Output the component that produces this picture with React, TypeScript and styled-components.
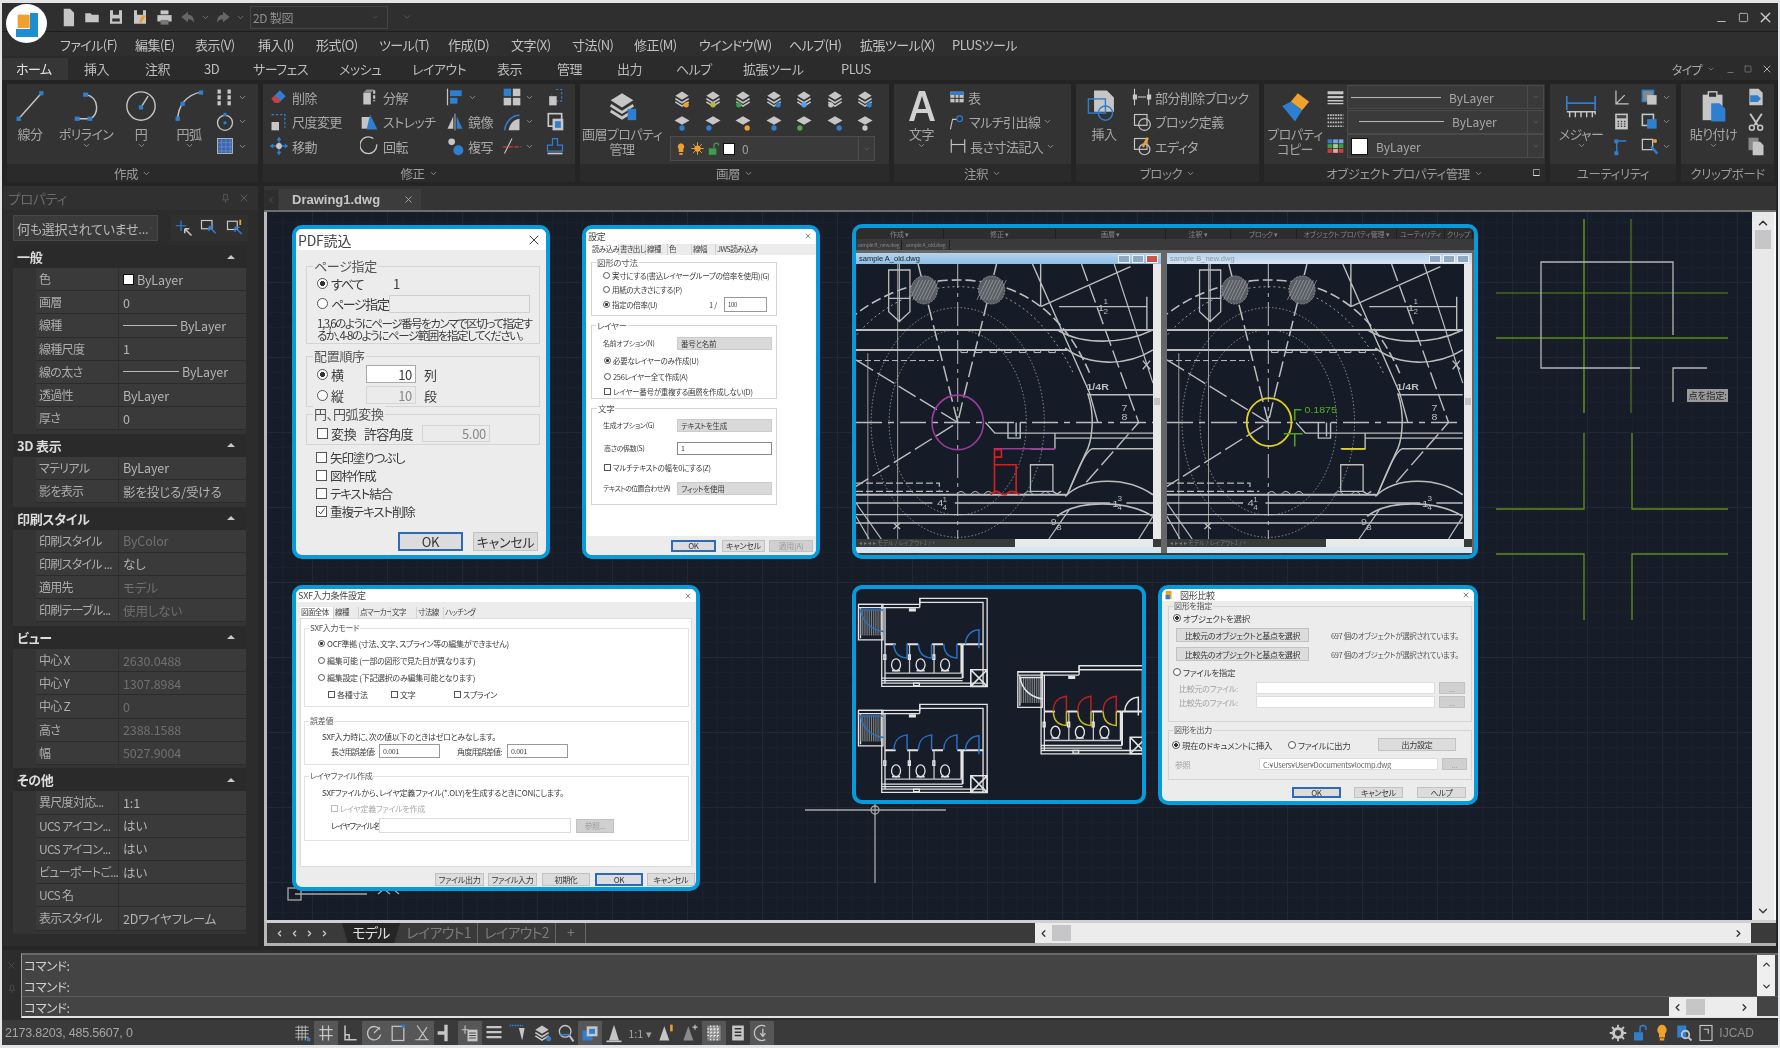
import React, { ReactNode } from 'react';
import styled, { createGlobalStyle } from 'styled-components';
import { ChevronDown, ChevronUp, ChevronLeft, ChevronRight, X, Minus, Square } from 'lucide-react';

const G = '#c6c6c6';
const D = '#8a8a8a';
const B = '#2f7fd0';
const O = '#efa02d';
const R = '#d23b3b';
const FONT = '"Noto Sans CJK JP", "Noto Sans", sans-serif';

const Global = createGlobalStyle`
  html, body { margin: 0; padding: 0; background: #2a2a2a; overflow: hidden; }
  * { box-sizing: border-box; }
  body { font-family: ${FONT}; font-feature-settings: "palt"; }
`;

const Root = styled.div`
  position: relative;
  width: 1780px;
  height: 1048px;
  padding: 3px 2px;
  background: #e2e4e6;
  display: flex;
  flex-direction: column;
  overflow: hidden;
  filter: blur(0.45px);
`;

/* ---------- title ---------- */
const LogoBadge = styled.div`
  position: absolute;
  left: 6px;
  top: 4px;
  width: 41px;
  height: 39px;
  border-radius: 50%;
  background: #fff;
  display: flex;
  align-items: center;
  justify-content: center;
  z-index: 5;
`;
const TitleBar = styled.div`
  height: 29px;
  background: #2f2f2f;
  border-bottom: 1px solid #1d1d1d;
  display: flex;
  align-items: center;
  padding-left: 54px;
  flex: none;
`;
const QuickIcon = styled.span<{ $w?: number }>`
  width: ${(p) => p.$w ?? 24}px;
  display: flex;
  align-items: center;
  justify-content: center;
  color: #888;
`;
const WorkspaceCombo = styled.div`
  width: 138px;
  height: 23px;
  border: 1px solid #454545;
  margin-left: 5px;
  display: flex;
  align-items: center;
  justify-content: space-between;
  padding: 0 8px 0 2px;
  color: #8f8f8f;
  font-size: 12px;
  letter-spacing: -0.3px;
`;
const WindowButtons = styled.div`
  margin-left: auto;
  display: flex;
  align-items: center;
  gap: 6px;
  padding-right: 4px;
  color: #b8b8b8;
`;
const MenuBar = styled.div`
  height: 24px;
  background: #2f2f2f;
  display: flex;
  align-items: center;
  padding-left: 58px;
  flex: none;
`;
const MenuItem = styled.span<{ $w: number }>`
  width: ${(p) => p.$w}px;
  flex: none;
  font-size: 13px;
  color: #c2c2c2;
  letter-spacing: -0.55px;
  white-space: nowrap;
`;
const TabBar = styled.div`
  height: 24px;
  background: #2b2b2b;
  display: flex;
  align-items: flex-end;
  flex: none;
`;
const RibbonTab = styled.span<{ $w: number; $active?: boolean }>`
  width: ${(p) => p.$w}px;
  height: 22px;
  flex: none;
  margin-right: ${(p) => (p.$active ? 16 : 0)}px;
  font-size: 13px;
  line-height: 22px;
  padding-left: ${(p) => (p.$active ? 14 : 0)}px;
  color: ${(p) => (p.$active ? '#e4e4e4' : '#bdbdbd')};
  background: ${(p) => (p.$active ? '#363636' : 'transparent')};
  letter-spacing: -0.5px;
  white-space: nowrap;
`;
const TabRight = styled.div`
  margin-left: auto;
  display: flex;
  align-items: center;
  height: 22px;
  gap: 5px;
  padding-right: 5px;
  color: #a8a8a8;
  font-size: 12px;
  letter-spacing: -0.6px;
`;

/* ---------- ribbon ---------- */
const Ribbon = styled.div`
  height: 106px;
  background: #242424;
  padding: 4px 0 4px 5px;
  display: flex;
  gap: 5px;
  flex: none;
`;
const Panel = styled.div<{ $w: number }>`
  width: ${(p) => p.$w}px;
  flex: none;
  display: flex;
  flex-direction: column;
`;
const PanelBody = styled.div<{ $pl?: number }>`
  height: 80px;
  background: #333333;
  display: flex;
  padding-left: ${(p) => p.$pl ?? 0}px;
`;
const PanelTitle = styled.div`
  position: relative;
  height: 18px;
  background: #2a2a2a;
  color: #9b9b9b;
  font-size: 12.5px;
  letter-spacing: -0.4px;
  display: flex;
  align-items: center;
  justify-content: center;
  gap: 4px;
`;
const Launcher = styled.span`
  position: absolute;
  right: 5px;
  top: 5px;
  width: 7px;
  height: 7px;
  border: 1px solid #999;
  border-right-color: #555;
  border-bottom-color: #ddd;
`;
const BigBtn = styled.div<{ $w: number }>`
  width: ${(p) => p.$w}px;
  flex: none;
  display: flex;
  flex-direction: column;
  align-items: center;
  padding-top: 5px;
  color: #a5a5a5;
  font-size: 13px;
  letter-spacing: -0.55px;
  line-height: 15px;
  text-align: center;
  svg { flex: none; }
`;
const BigLabel = styled.span`
  margin-top: 3px;
  white-space: nowrap;
`;
const ToolCol = styled.div<{ $w: number }>`
  width: ${(p) => p.$w}px;
  flex: none;
  display: flex;
  flex-direction: column;
  padding-top: 1px;
`;
const ToolRow = styled.div`
  height: 24.5px;
  display: flex;
  align-items: center;
  gap: 3px;
  color: #a8a8a8;
  font-size: 13px;
  letter-spacing: -0.55px;
  white-space: nowrap;
`;
const LayerGrid = styled.div`
  display: grid;
  grid-template-columns: repeat(7, 30.5px);
  grid-auto-rows: 24px;
  justify-items: center;
  align-items: center;
  padding-left: 3px;
  margin-top: 2px;
`;
const LayerCombo = styled.div`
  width: 205px;
  height: 25px;
  margin: 1px 0 0 6px;
  background: #3a3a3a;
  border: 1px solid #4c4c4c;
  display: flex;
  align-items: center;
  gap: 2px;
  padding-left: 3px;
  color: #a0a0a0;
  font-size: 12px;
`;
const ComboArrow = styled.span`
  margin-left: auto;
  width: 16px;
  align-self: stretch;
  border-left: 1px solid #4c4c4c;
  display: flex;
  align-items: center;
  justify-content: center;
  color: #666;
`;
const Swatch = styled.span<{ $s?: number }>`
  width: ${(p) => p.$s ?? 12}px;
  height: ${(p) => p.$s ?? 12}px;
  background: #fff;
  border: 1px solid #111;
  flex: none;
`;
const PropRow = styled.div`
  display: flex;
  align-items: center;
  height: 24.5px;
  gap: 2px;
`;
const PropCombo = styled.div`
  width: 197px;
  height: 24px;
  background: #3a3a3a;
  border: 1px solid #4a4a4a;
  display: flex;
  align-items: center;
  gap: 8px;
  padding-left: 3px;
  color: #a8a8a8;
  font-size: 12px;
`;
const LineSample = styled.span<{ $w: number }>`
  width: ${(p) => p.$w}px;
  height: 1px;
  background: #b8b8b8;
  display: inline-block;
  flex: none;
`;

/* ---------- main ---------- */
const Main = styled.div`
  height: 764px;
  display: flex;
  background: #262626;
  flex: none;
`;
const Props = styled.aside`
  width: 255px;
  height: 760px;
  flex: none;
  margin-left: 1px;
  background: #2c2c2c;
  display: flex;
  flex-direction: column;
  padding: 0 10px 0 10px;
`;
const PropsTitle = styled.div`
  height: 24px;
  margin: 0 -10px;
  padding: 0 8px 0 5px;
  background: #303030;
  display: flex;
  align-items: center;
  justify-content: space-between;
  color: #6a6a6a;
  font-size: 13.5px;
  letter-spacing: -0.3px;
`;
const SelectLine = styled.div`
  display: flex;
  justify-content: space-between;
  margin: 5px 0 4px;
  height: 26px;
`;
const SelectBox = styled.div`
  width: 145px;
  background: #3a3a3a;
  border: 1px solid #484848;
  display: flex;
  align-items: center;
  padding: 0 3px;
  color: #b8b8b8;
  font-size: 13px;
  letter-spacing: -0.25px;
  white-space: nowrap;
  justify-content: space-between;
`;
const SelectTools = styled.div`
  width: 77px;
  background: #303030;
  display: flex;
  align-items: center;
  justify-content: space-around;
`;
const SectionHead = styled.div`
  height: 23px;
  width: 233px;
  background: #2a2a2a;
  padding: 0 4px;
  display: flex;
  align-items: center;
  justify-content: space-between;
  color: #dcdcdc;
  font-size: 13px;
  font-weight: 700;
  letter-spacing: -0.3px;
`;
const Caret = styled.span`
  width: 0;
  height: 0;
  margin-right: 7px;
  border-left: 4px solid transparent;
  border-right: 4px solid transparent;
  border-bottom: 4px solid #c8c8c8;
`;
const SectionBody = styled.div`
  width: 233px;
  background: #343434;
  padding-bottom: 3.5px;
`;
const PropLine = styled.div`
  height: 23.2px;
  margin-left: 23px;
  display: flex;
  border-bottom: 1px solid #2b2b2b;
  background: #3a3a3a;
`;
const PropName = styled.span`
  width: 83px;
  flex: none;
  padding-left: 3px;
  border-right: 1px solid #2f2f2f;
  color: #adadad;
  font-size: 12px;
  line-height: 21px;
  letter-spacing: -0.7px;
  white-space: nowrap;
`;
const PropValue = styled.span<{ $dim?: boolean }>`
  flex: 1;
  padding-left: 4px;
  display: flex;
  align-items: center;
  gap: 3px;
  color: ${(p) => (p.$dim ? '#707070' : '#b4b4b4')};
  font-size: 12.5px;
  letter-spacing: -0.1px;
  white-space: nowrap;
  overflow: hidden;
`;
const Doc = styled.section`
  width: 1512px;
  flex: none;
  margin-left: 6px;
  display: flex;
  flex-direction: column;
`;
const DocTabs = styled.div`
  height: 26px;
  background: #343434;
  border-bottom: 2px solid #6d6d6d;
  display: flex;
  align-items: flex-end;
  flex: none;
`;
const DocArrow = styled.span`
  width: 14px;
  height: 20px;
  background: #2d2d2d;
  display: flex;
  align-items: center;
  justify-content: center;
  color: #5a5a5a;
`;
const DocTab = styled.span`
  width: 142px;
  height: 21px;
  margin-left: 1px;
  background: #3c3c3c;
  display: flex;
  align-items: center;
  justify-content: space-between;
  padding: 0 7px 0 13px;
  color: #c6c6c6;
  font-size: 13px;
  font-family: 'Liberation Sans', sans-serif;
  font-weight: 700;
`;
const CanvasRow = styled.div`
  height: 708px;
  display: flex;
  border-left: 3px solid #b9b9b9;
  flex: none;
`;
const Canvas = styled.div`
  position: relative;
  width: 1485px;
  height: 708px;
  flex: none;
  overflow: hidden;
  background-color: #161d29;
  background-image:
    linear-gradient(#202935 1px, transparent 1px),
    linear-gradient(90deg, #202935 1px, transparent 1px),
    linear-gradient(#1a212d 1px, transparent 1px),
    linear-gradient(90deg, #1a212d 1px, transparent 1px);
  background-size: 75px 75px, 75px 75px, 15px 15px, 15px 15px;
  background-position: -30px -5px;
`;
const CanvasOverlay = styled.svg`
  position: absolute;
  inset: 0;
  width: 100%;
  height: 100%;
`;
const CursorTip = styled.div`
  position: absolute;
  left: 1420px;
  top: 177px;
  width: 41px;
  height: 13px;
  background: #9a9a9a;
  color: #2a2a2a;
  font-size: 9.5px;
  line-height: 13px;
  text-align: center;
  letter-spacing: -0.3px;
  white-space: nowrap;
`;
const VScroll = styled.div`
  width: 24px;
  flex: none;
  background: #e9e9e9;
  border-right: 2px solid #f8f8f8;
  display: flex;
  flex-direction: column;
  align-items: center;
  color: #333;
`;
const VThumb = styled.span`
  width: 16px;
  height: 19px;
  background: #c6c6c8;
`;
const VFill = styled.span`
  flex: 1;
`;
const DocFoot = styled.div`
  height: 26px;
  background: #3a3a3a;
  border-top: 3px solid #d0d0d0;
  border-left: 3px solid #b9b9b9;
  border-bottom: 3px solid #b0b0b0;
  display: flex;
  flex: none;
`;
const NavGroup = styled.div`
  width: 75px;
  display: flex;
  align-items: center;
  justify-content: space-around;
  padding: 0 10px 0 5px;
  flex: none;
`;
const SheetTab = styled.span<{ $active?: boolean; $w: number }>`
  width: ${(p) => p.$w}px;
  flex: none;
  height: 20px;
  background: ${(p) => (p.$active ? '#252525' : 'transparent')};
  color: ${(p) => (p.$active ? '#e0e0e0' : '#7c7c7c')};
  clip-path: ${(p) => (p.$active ? 'polygon(0 0,100% 0,90% 100%,10% 100%)' : 'none')};
  border-right: ${(p) => (p.$active ? 'none' : '1px solid #666')};
  text-align: center;
  font-size: 14px;
  line-height: 19px;
  letter-spacing: -0.7px;
  white-space: nowrap;
`;
const HScroll = styled.div<{ $w: number; $ml?: string }>`
  width: ${(p) => p.$w}px;
  margin-left: ${(p) => p.$ml ?? 'auto'};
  height: 20px;
  flex: none;
  background: #ececec;
  display: flex;
  align-items: center;
  color: #333;
  padding: 0 7px 0 3px;
  gap: 3px;
`;
const HThumb = styled.span`
  width: 19px;
  height: 16px;
  background: #c6c6c8;
  flex: none;
`;

/* ---------- command + status ---------- */
const Command = styled.div`
  height: 70px;
  background: #2c2c2c;
  display: flex;
  padding: 3px 0 2px;
  flex: none;
`;
const CommandGrip = styled.div`
  width: 19px;
  flex: none;
  color: #4d4d4d;
  display: flex;
  flex-direction: column;
  align-items: center;
  gap: 13px;
  padding-top: 7px;
`;
const CommandBox = styled.div`
  flex: 1;
  background: #444444;
  border-top: 2px solid #6a6a6a;
  border-left: 1px solid #9a9a9a;
  border-bottom: 2px solid #e2e2e2;
  display: flex;
  flex-direction: column;
`;
const CommandHistory = styled.div`
  height: 42px;
  display: flex;
  border-bottom: 1px solid #5a5a5a;
  flex: none;
`;
const CommandLines = styled.div`
  flex: 1;
  padding-left: 2px;
`;
const CommandLine = styled.div`
  height: 21px;
  line-height: 22px;
  color: #cfcfcf;
  font-size: 12.5px;
  letter-spacing: -0.4px;
`;
const CommandInput = styled.div`
  flex: 1;
  display: flex;
  padding-left: 2px;
  align-items: center;
  color: #cfcfcf;
  font-size: 12.5px;
  letter-spacing: -0.4px;
`;
const CmdScroll = styled.div`
  width: 18px;
  margin-right: 3px;
  background: #efefef;
  display: flex;
  flex-direction: column;
  align-items: center;
  justify-content: space-between;
  padding: 4px 0;
  color: #333;
`;
const Status = styled.div`
  height: 25px;
  background: #3a3a3a;
  display: flex;
  align-items: center;
  flex: none;
  color: #a4a4a4;
  font-size: 12.5px;
`;
const Coord = styled.span`
  width: 288px;
  flex: none;
  padding-left: 3px;
  letter-spacing: -0.2px;
  font-family: 'Liberation Sans', sans-serif;
`;
const StatusBtn = styled.span<{ $on?: boolean; $w?: number }>`
  width: ${(p) => p.$w ?? 24}px;
  height: 24px;
  flex: none;
  display: flex;
  align-items: center;
  justify-content: center;
  background: ${(p) => (p.$on ? '#575757' : 'transparent')};
  font-size: 11px;
  color: #a0a0a0;
`;
const StatusRight = styled.div`
  margin-left: auto;
  display: flex;
  align-items: center;
  gap: 4px;
  padding-right: 24px;
  color: #8f8f8f;
  font-size: 12px;
  font-family: 'Liberation Sans', sans-serif;
`;

/* ---------- dialogs on canvas ---------- */
const Callout = styled.div<{ $x: number; $y: number; $w: number; $h: number; $bg?: string }>`
  position: absolute;
  left: ${(p) => p.$x - 267}px;
  top: ${(p) => p.$y - 212}px;
  width: ${(p) => p.$w}px;
  height: ${(p) => p.$h}px;
  border: 4px solid #059bdc;
  border-radius: 10px;
  background: ${(p) => p.$bg ?? '#ececec'};
  overflow: hidden;
  display: flex;
  flex-direction: column;
  color: #3c3c3c;
`;
const DlgTitle = styled.div<{ $h: number; $fs: number }>`
  height: ${(p) => p.$h}px;
  flex: none;
  background: #fff;
  display: flex;
  align-items: center;
  justify-content: space-between;
  padding: 0 4px 0 2px;
  font-size: ${(p) => p.$fs}px;
  color: #444;
  letter-spacing: -0.2px;
`;
const Group = styled.div<{ $h: number; $mt: number; $ml?: number; $mr?: number; $pl?: number; $fs?: number; $bc?: string }>`
  position: relative;
  height: ${(p) => p.$h}px;
  margin: ${(p) => p.$mt}px ${(p) => p.$mr ?? 0}px 0 ${(p) => p.$ml ?? 0}px;
  border: 1px solid ${(p) => p.$bc ?? '#d4d4d4'};
  padding-left: ${(p) => p.$pl ?? 0}px;
  font-size: ${(p) => p.$fs ?? 13}px;
  flex: none;
`;
const Legend = styled.span<{ $bg?: string; $x?: number; $fs?: number }>`
  position: absolute;
  left: ${(p) => p.$x ?? 6}px;
  top: ${(p) => -(p.$fs ?? 13) * 0.7}px;
  padding: 0 1px;
  background: ${(p) => p.$bg ?? '#ececec'};
  font-size: ${(p) => p.$fs ?? 13}px;
  line-height: ${(p) => (p.$fs ?? 13) * 1.3}px;
  color: #555;
  letter-spacing: -0.3px;
  white-space: nowrap;
`;
const Row = styled.div<{ $h: number; $mt?: number; $ml?: number; $gap?: number; $fs?: number; $color?: string; $ls?: number }>`
  height: ${(p) => p.$h}px;
  margin-top: ${(p) => p.$mt ?? 0}px;
  margin-left: ${(p) => p.$ml ?? 0}px;
  display: flex;
  align-items: center;
  gap: ${(p) => p.$gap ?? 0}px;
  ${(p) => (p.$fs ? `font-size:${p.$fs}px;` : '')}
  ${(p) => (p.$color ? `color:${p.$color};` : '')}
  letter-spacing: ${(p) => p.$ls ?? -0.3}px;
  white-space: nowrap;
`;
const HelpLine = styled.div<{ $mt?: number }>`
  height: 12px;
  margin: ${(p) => p.$mt ?? 0}px 0 0 10px;
  display: flex;
  align-items: center;
  font-size: 11.5px;
  letter-spacing: -1.45px;
  white-space: nowrap;
`;
const Fix = styled.span<{ $w: number; $ls?: number }>`
  width: ${(p) => p.$w}px;
  flex: none;
  display: inline-flex;
  align-items: center;
  gap: 2px;
  white-space: nowrap;
  ${(p) => (p.$ls !== undefined ? `letter-spacing:${p.$ls}px;` : '')}
`;
const Radio = styled.span<{ $on?: boolean; $s: number }>`
  width: ${(p) => p.$s}px;
  height: ${(p) => p.$s}px;
  flex: none;
  border-radius: 50%;
  border: 1px solid #555;
  background: ${(p) => (p.$on ? 'radial-gradient(circle, #333 0 38%, #fff 45%)' : '#fff')};
`;
const Check = styled.span<{ $on?: boolean; $s: number; $muted?: boolean }>`
  width: ${(p) => p.$s}px;
  height: ${(p) => p.$s}px;
  flex: none;
  border: 1px solid ${(p) => (p.$muted ? '#bbb' : '#555')};
  background: #fff;
  display: flex;
  align-items: center;
  justify-content: center;
  color: #333;
`;
const Field = styled.span<{ $w: number; $h: number; $ml?: number; $bg?: string; $bc?: string; $align?: string; $fs?: number; $color?: string }>`
  width: ${(p) => p.$w}px;
  height: ${(p) => p.$h}px;
  margin-left: ${(p) => p.$ml ?? 0}px;
  flex: none;
  background: ${(p) => p.$bg ?? '#fff'};
  border: 1px solid ${(p) => p.$bc ?? '#bcbcbc'};
  display: flex;
  align-items: center;
  justify-content: ${(p) => p.$align ?? 'flex-start'};
  padding: 0 3px;
  overflow: hidden;
  ${(p) => (p.$fs ? `font-size:${p.$fs}px;` : '')}
  color: ${(p) => p.$color ?? 'inherit'};
`;
const Spacer = styled.span<{ $w: number }>`
  width: ${(p) => p.$w}px;
  flex: none;
  display: inline-block;
`;
const DlgBtn = styled.span<{ $w: number; $h: number; $ml?: number; $default?: boolean; $fs: number; $muted?: boolean }>`
  width: ${(p) => p.$w}px;
  height: ${(p) => p.$h}px;
  margin-left: ${(p) => p.$ml ?? 0}px;
  flex: none;
  background: ${(p) => (p.$muted ? '#d0d0d0' : '#dcdcdc')};
  border: 1px solid ${(p) => (p.$default ? '#2d6cb5' : '#c2c2c2')};
  ${(p) => (p.$default ? 'outline: 1px solid #2d6cb5;outline-offset:-2px;' : '')}
  font-size: ${(p) => p.$fs}px;
  color: ${(p) => (p.$muted ? '#9c9c9c' : '#333')};
  display: flex;
  align-items: center;
  justify-content: center;
  letter-spacing: -0.3px;
  white-space: nowrap;
`;
const BtnBar = styled.div<{ $pr: number; $mt?: number; $pos?: string }>`
  margin-top: ${(p) => p.$mt ?? 0}px;
  display: flex;
  justify-content: ${(p) => p.$pos ?? 'flex-end'};
  padding-right: ${(p) => p.$pr}px;
  flex: none;
`;
const Tabs = styled.div<{ $ml: number; $h: number; $mt: number }>`
  height: ${(p) => p.$h}px;
  margin: ${(p) => p.$mt}px 0 0 ${(p) => p.$ml}px;
  display: flex;
  flex: none;
  background: #ececec;
`;
const Tab = styled.span<{ $w: number; $on?: boolean; $fs: number }>`
  width: ${(p) => p.$w}px;
  flex: none;
  font-size: ${(p) => p.$fs}px;
  line-height: ${(p) => p.$fs + 3}px;
  padding-left: 1px;
  color: #444;
  background: ${(p) => (p.$on ? '#fff' : '#ebebeb')};
  border-right: 1px solid #d2d2d2;
  letter-spacing: -0.6px;
  white-space: nowrap;
`;
const WhitePage = styled.div<{ $h: number; $mx: number }>`
  height: ${(p) => p.$h}px;
  margin: 0 ${(p) => p.$mx}px;
  background: #fff;
  border: 1px solid #dcdcdc;
  flex: none;
  overflow: hidden;
`;
const WhiteFill = styled.div`
  position: relative;
  flex: 1;
  background: #fff;
`;
const BottomBand = styled.div<{ $h: number }>`
  height: ${(p) => p.$h}px;
  background: #ececec;
  flex: none;
  display: flex;
  align-items: center;
`;

/* compare window */
const CmpStrip = styled.div<{ $h: number; $bg: string; $fs: number }>`
  height: ${(p) => p.$h}px;
  background: ${(p) => p.$bg};
  flex: none;
  display: flex;
  align-items: center;
  color: #858585;
  font-size: ${(p) => p.$fs}px;
  letter-spacing: -0.2px;
  white-space: nowrap;
`;
const CmpCell = styled.span<{ $w: number }>`
  width: ${(p) => p.$w}px;
  flex: none;
  text-align: center;
  border-right: 1px solid #202020;
  line-height: 10px;
`;
const CmpPanes = styled.div`
  display: flex;
  flex: none;
  gap: 6px;
  background: #666;
  padding-top: 3px;
  height: 303px;
`;
const CmpWin = styled.div`
  width: 305px;
  flex: none;
  display: flex;
  flex-direction: column;
  background: #d7e6f3;
`;
const CmpBar = styled.div<{ $active?: boolean }>`
  height: 11px;
  background: linear-gradient(#b5d4ee, ${(p) => (p.$active ? '#8dbde6' : '#d5e4f1')});
  display: flex;
  align-items: center;
  gap: 2px;
  padding: 0 3px;
  color: ${(p) => (p.$active ? '#222' : '#8b98a4')};
  font-size: 7.5px;
  font-family: 'Liberation Sans', sans-serif;
  flex: none;
  white-space: nowrap;
`;
const CmpBtn = styled.span<{ $red?: boolean }>`
  width: 12px;
  height: 8px;
  background: ${(p) => (p.$red ? '#c9564b' : '#8fa9c2')};
  border: 1px solid #eee;
  flex: none;
`;
const CmpBtnGap = styled.span`
  margin-left: auto;
`;
const CmpBody = styled.div`
  height: 275px;
  display: flex;
  flex: none;
`;
const Dwg = styled.svg`
  flex: 1;
  height: 100%;
  background: #151c28;
  display: block;
  min-width: 0;
  * { vector-effect: non-scaling-stroke; }
`;
const CmpV = styled.div`
  width: 8px;
  flex: none;
  background: #e8e8e8;
  display: flex;
  flex-direction: column;
  align-items: center;
  justify-content: center;
`;
const CmpVThumb = styled.span`
  width: 6px;
  height: 7px;
  background: #c4c4c4;
`;
const CmpFoot = styled.div`
  height: 8px;
  background: #3a3a3a;
  display: flex;
  flex: none;
  color: #777;
  font-size: 5.5px;
  line-height: 8px;
  padding-left: 3px;
  letter-spacing: 0.2px;
  white-space: nowrap;
`;
const CmpHScroll = styled.span`
  margin-left: auto;
  width: 138px;
  background: #e9e9e9;
  margin-right: 8px;
`;
const PlanSvg = styled.svg`
  width: 100%;
  height: 100%;
  display: block;
  * { vector-effect: non-scaling-stroke; }
`;
const CmpNote = styled.span`
  margin-left: 22px;
  font-size: 7.5px;
  letter-spacing: -0.35px;
  color: #555;
`;

/* ---------- icon helper ---------- */
const Icn = ({ s = 18, children, w, h }: { s?: number; w?: number; h?: number; children: ReactNode }) => (
  <svg width={w ?? s} height={h ?? s} viewBox="0 0 24 24" fill="none" style={{ flex: 'none' }}>
    {children}
  </svg>
);
const Chev = ({ s = 9 }: { s?: number }) => <ChevronDown size={s} color="#9a9a9a" strokeWidth={2.2} />;

const layerBase = (
  <>
    <path d="M12 3 20 8 12 13 4 8z" fill={G} />
    <path d="M4 11.5 12 16.5 20 11.5" stroke={G} strokeWidth="2" />
    <path d="M4 15.5 12 20.5 20 15.5" stroke={G} strokeWidth="2" />
  </>
);
const LayerIcn = ({ c, i }: { c: string; i: number }) => (
  <Icn s={20}>
    {i > 6 ? <path d="M12 4 21 9 12 14 3 9z" fill={G} /> : layerBase}
    <circle cx={i % 3 === 0 ? 17 : i % 3 === 1 ? 12 : 7} cy={i > 6 ? 18 : 19} r="3.2" fill={c} />
  </Icn>
);

const icons: Record<string, ReactNode> = {
  erase: <><path d="M3 14 13 4l7 7-8 8H7z" fill={B} /><path d="M3 14l4 5h5l2-2-7-7z" fill={R} /></>,
  explode: <><path d="M4 7h9v14H4z" fill={G} /><path d="M4 7l4-4h9l-4 4z" fill="#8f8f8f" /><path d="M17 4v13" stroke={G} strokeWidth="2.5" strokeDasharray="4 2" /></>,
  scale: <><path d="M3 3h16v16" stroke={B} strokeWidth="1.5" strokeDasharray="3 2" /><rect x="3" y="12" width="9" height="10" fill={G} /></>,
  stretch: <><rect x="2" y="6" width="10" height="14" fill={G} /><path d="M12 3 21 21H8z" fill={B} /></>,
  move: <><path d="M12 2v20M2 12h20" stroke={B} strokeWidth="1.6" /><circle cx="12" cy="12" r="3.5" fill={G} /><path d="M12 1 9 5h6zM12 23l-3-4h6zM1 12l4-3v6zM23 12l-4-3v6z" fill={B} /></>,
  rotate: <path d="M16 3a10 10 0 1 0 4 7" stroke={G} strokeWidth="1.6" />,
  copy: <><circle cx="8" cy="7" r="4" fill={G} /><circle cx="16" cy="17" r="6" fill={B} /></>,
  mirror: <><path d="M3 20 10 5v15z" fill={G} /><path d="M14 5v15h7z" fill={B} /><path d="M12 2v20" stroke={G} strokeWidth="1" /></>,
  align: <><path d="M3 2v20" stroke={G} strokeWidth="1.5" /><rect x="6" y="4" width="14" height="7" fill={B} /><rect x="6" y="13" width="9" height="7" fill={B} /></>,
  grid4: <><rect x="2" y="2" width="9" height="9" fill={B} /><rect x="13" y="2" width="9" height="9" fill={G} /><rect x="2" y="13" width="9" height="9" fill={G} /><rect x="13" y="13" width="9" height="9" fill={G} /></>,
  fillet: <><path d="M21 4C12 4 5 11 3 22" stroke={B} strokeWidth="1.8" /><path d="M21 8v14H8C9 14 14 9 21 8z" fill={G} /></>,
  trim: <><path d="M3 21 12 3" stroke={G} strokeWidth="1.4" /><path d="M1 13h22" stroke={R} strokeWidth="1.4" strokeDasharray="5 2" /></>,
  dash: <><path d="M13 3h7v14h-12v-8" stroke={B} strokeWidth="1.4" strokeDasharray="3 2" /><rect x="5" y="11" width="9" height="11" fill={G} /></>,
  offset: <><rect x="4" y="2" width="16" height="15" stroke={G} strokeWidth="2" /><rect x="9" y="8" width="13" height="14" fill={G} /><rect x="12" y="11" width="7" height="8" fill={B} /></>,
  stamp: <><path d="M9 3h6v8h6v7H3v-7h6z" stroke={B} strokeWidth="1.5" /><path d="M3 21h18" stroke={G} strokeWidth="2" /></>,
  dots: <><rect x="3" y="3" width="4" height="5" fill={G} /><rect x="15" y="3" width="4" height="5" fill={G} /><rect x="3" y="10" width="4" height="5" fill={G} /><rect x="15" y="10" width="4" height="5" fill={G} /><rect x="3" y="17" width="4" height="5" fill={G} /><rect x="15" y="17" width="4" height="5" fill={G} /></>,
  ring: <><circle cx="12" cy="13" r="9" stroke={G} strokeWidth="1.6" /><circle cx="12" cy="13" r="2" fill={B} /><rect x="10" y="1" width="4" height="4" fill={B} /></>,
  hatch: <><rect x="3" y="3" width="18" height="18" fill="#3c64a8" stroke={G} /><path d="M3 8h18M3 13h18M3 18h18M8 3v18M13 3v18M18 3v18" stroke="#7b9bd0" strokeWidth=".7" /></>,
  table: <><rect x="2" y="4" width="20" height="16" fill={G} /><rect x="2" y="4" width="20" height="5" fill={B} /><path d="M2 14h20M9 9v11M15 9v11" stroke="#333" strokeWidth="1.5" /></>,
  leader: <><path d="M2 23 5 9h6" stroke={G} strokeWidth="1.5" /><circle cx="15" cy="8" r="4" stroke={B} strokeWidth="1.6" /></>,
  dim: <><path d="M3 3v18M21 3v18" stroke={G} strokeWidth="1.5" /><path d="M3 10h18" stroke={G} strokeWidth="1.5" /></>,
  partial: <><path d="M3 2v20M20 2v20" stroke={G} strokeWidth="1.3" /><rect x="1" y="9" width="5" height="6" fill={G} /><rect x="18" y="9" width="5" height="6" fill={G} /><path d="M7 12h10" stroke={G} strokeWidth="1.3" /></>,
  blockdef: <><rect x="3" y="3" width="15" height="13" stroke={G} strokeWidth="1.4" /><circle cx="15" cy="15" r="7" stroke={G} strokeWidth="1.4" /></>,
  editor: <><rect x="3" y="3" width="15" height="13" stroke={G} strokeWidth="1.4" /><circle cx="15" cy="16" r="6.5" stroke={G} strokeWidth="1.4" /><path d="M13 13 19 2" stroke={O} strokeWidth="3" /></>,
  ltype: <path d="M2 4h20v4H2zM2 10h20v3H2zM2 15h20v2H2zM2 19h20v1.5H2z" fill={G} />,
  lweight: <path d="M2 4h20M2 8h20M2 13h20M2 18h20" stroke={G} strokeWidth="2.2" strokeDasharray="2 1.2" />,
  colors: <><rect x="2" y="3" width="6" height="5" fill={B} /><rect x="9" y="3" width="6" height="5" fill="#7aa7d8" /><rect x="16" y="3" width="6" height="5" fill="#7aa7d8" /><rect x="2" y="9" width="6" height="5" fill="#3e9c3e" /><rect x="9" y="9" width="6" height="5" fill="#9ed09e" /><rect x="16" y="9" width="6" height="5" fill="#3e9c3e" /><rect x="2" y="15" width="6" height="5" fill={R} /><rect x="9" y="15" width="6" height="5" fill="#e9a8a8" /><rect x="16" y="15" width="6" height="5" fill={R} /></>,
  coord: <path d="M5 3v17h16M5 20 16 9" stroke={G} strokeWidth="1.5" />,
  selGroup: <><rect x="3" y="3" width="14" height="14" fill="#888" stroke={B} strokeWidth="2" /><rect x="9" y="9" width="12" height="12" fill={G} /></>,
  calc: <><rect x="4" y="2" width="16" height="20" fill={G} /><rect x="6" y="4" width="12" height="4" fill="#444" /><path d="M7 12h10M7 15h10M7 18h10" stroke="#444" strokeWidth="1.8" strokeDasharray="2 2" /></>,
  quick: <><rect x="3" y="3" width="14" height="14" stroke={G} strokeWidth="2" /><rect x="9" y="9" width="12" height="12" fill={B} /></>,
  dimA: <><path d="M6 21V5h12" stroke={B} strokeWidth="1.8" /><rect x="3" y="3" width="5" height="5" fill={B} /><rect x="3" y="18" width="5" height="5" fill={B} /></>,
  selPick: <><rect x="3" y="3" width="13" height="13" stroke={G} strokeWidth="1.6" /><path d="M14 12 22 21" stroke={B} strokeWidth="3" /><circle cx="19" cy="5" r="2.5" fill={O} /></>,
  pasteExt: <><path d="M4 2h11l5 5v15H4z" fill={G} /><path d="M5 10h9l4 4-4 4H5z" fill={B} /></>,
  cut: <><path d="M5 2l9 14M19 2 10 16" stroke={G} strokeWidth="2.2" /><circle cx="7" cy="19" r="3" stroke={G} strokeWidth="1.8" /><circle cx="17" cy="19" r="3" stroke={G} strokeWidth="1.8" /></>,
  copyDoc: <><rect x="3" y="2" width="12" height="15" fill="#888" /><path d="M8 7h9l4 4v12H8z" fill={G} /></>,
};
const T = ({ n, s = 18 }: { n: string; s?: number }) => <Icn s={s}>{icons[n]}</Icn>;

/* ---------- data ---------- */
const menu: [string, number][] = [
  ['ファイル(F)', 75], ['編集(E)', 60], ['表示(V)', 63], ['挿入(I)', 58], ['形式(O)', 63], ['ツール(T)', 69], ['作成(D)', 63],
  ['文字(X)', 61], ['寸法(N)', 62], ['修正(M)', 65], ['ウインドウ(W)', 90], ['ヘルプ(H)', 71], ['拡張ツール(X)', 92], ['PLUSツール', 80],
];
const ribbonTabs: [string, number][] = [
  ['ホーム', 66], ['挿入', 61], ['注釈', 59], ['3D', 49], ['サーフェス', 86], ['メッシュ', 73], ['レイアウト', 85], ['表示', 60], ['管理', 60],
  ['出力', 59], ['ヘルプ', 67], ['拡張ツール', 98], ['PLUS', 60],
];
type P = { n: string; v: ReactNode; dim?: boolean };
const bars = (w: number) => <LineSample $w={w} />;
const sections: { t: string; rows: P[] }[] = [
  { t: '一般', rows: [
    { n: '色', v: <><Swatch $s={11} />ByLayer</> },
    { n: '画層', v: '0' },
    { n: '線種', v: <>{bars(54)}ByLayer</> },
    { n: '線種尺度', v: '1' },
    { n: '線の太さ', v: <>{bars(56)}ByLayer</> },
    { n: '透過性', v: 'ByLayer' },
    { n: '厚さ', v: '0' },
  ]},
  { t: '3D 表示', rows: [{ n: 'マテリアル', v: 'ByLayer' }, { n: '影を表示', v: '影を投じる/受ける' }] },
  { t: '印刷スタイル', rows: [
    { n: '印刷スタイル', v: 'ByColor', dim: true },
    { n: '印刷スタイル ...', v: 'なし' },
    { n: '適用先', v: 'モデル', dim: true },
    { n: '印刷テーブル...', v: '使用しない', dim: true },
  ]},
  { t: 'ビュー', rows: [
    { n: '中心 X', v: '2630.0488', dim: true },
    { n: '中心 Y', v: '1307.8984', dim: true },
    { n: '中心 Z', v: '0', dim: true },
    { n: '高さ', v: '2388.1588', dim: true },
    { n: '幅', v: '5027.9004', dim: true },
  ]},
  { t: 'その他', rows: [
    { n: '異尺度対応...', v: '1:1' },
    { n: 'UCS アイコン...', v: 'はい' },
    { n: 'UCS アイコン...', v: 'はい' },
    { n: 'ビューポートご...', v: 'はい' },
    { n: 'UCS 名', v: '' },
    { n: '表示スタイル', v: '2Dワイヤフレーム' },
  ]},
];

/* ---------- CAD drawings ---------- */
const HatchBlob = ({ cx }: { cx: number }) => (
  <g>
    <ellipse cx={cx} cy="220" rx="32" ry="42" fill="#5a5f66" stroke="#8a8a8a" strokeDasharray="2 1" />
    {[-24, -16, -8, 0, 8, 16, 24].map((d) => (
      <path key={d} d={`M${cx + d - 12} ${220 + 30} L${cx + d + 12} ${220 - 30}`} stroke="#a2a2a2" strokeWidth="0.7" />
    ))}
  </g>
);
const DrawingCommon = () => (
  <g fill="none" stroke="#bcbcbc" strokeWidth="1">
    <ellipse cx="277" cy="618" rx="168" ry="278" stroke="#8f8f8f" strokeDasharray="1.5 2" />
    <ellipse cx="277" cy="618" rx="212" ry="345" stroke="#8f8f8f" strokeDasharray="1.5 2" />
    <path d="M-60 400C40 240 170 190 277 190S520 240 600 470" strokeWidth="1.6" strokeDasharray="10 4" />
    <path d="M-20 440C60 270 180 210 277 210S480 270 560 470" stroke="#9a9a9a" strokeDasharray="2 3" />
    <path d="M277 142V968" strokeDasharray="24 5 4 5" />
    <path d="M130 142V968M57 410V968" stroke="#9c9c9c" />
    <path d="M28 618H755" strokeWidth="1.5" strokeDasharray="26 6 6 6" />
    <path d="M28 340H755" strokeWidth="2" />
    <path d="M28 400H545" strokeWidth="2" />
    <path d="M28 432H230" strokeDasharray="6 3" />
    {[285, 320, 356, 392, 428, 464, 500].map((x) => <path key={x} d={`M${x} 400v8h16v-8`} />)}
    <path d="M108 160h52v85h-52zM108 245v40l26 30 26-30v-40M134 142V315" strokeWidth="1.3" />
    <path d="M180 142 265 560 277 618 288 560 372 142" strokeWidth="1.5" strokeDasharray="16 5" />
    <HatchBlob cx={195} />
    <HatchBlob cx={360} />
    <path d="M28 430 277 618 28 810" strokeWidth="1.4" strokeDasharray="20 5" />
    <path d="M480 270 700 150M460 142 600 530 620 618M480 142V270M525 270H740M740 240V340" strokeWidth="1.4" />
    <path d="M580 142 720 618 590 800" strokeWidth="1.4" strokeDasharray="18 5" />
    <path d="M660 142 755 500" strokeWidth="1.2" />
    <path d="M520 340C580 385 680 385 755 340M540 395C600 450 690 450 755 400" strokeWidth="1.6" />
    <path d="M595 535H755M595 530C615 600 605 680 590 710L545 835" strokeWidth="1.5" />
    <path d="M345 618 368 650H515V697M368 650H755M400 618V665H430V618M420 618V660M515 665H755" strokeWidth="1.4" />
    <path d="M605 697H755M605 697C585 710 565 780 545 835M455 697H515" strokeWidth="1.4" />
    <path d="M455 745H510V825H455zM510 825l10 8 10-8" strokeWidth="1.3" />
    <path d="M28 800H232V822M28 825H255" strokeWidth="1.2" strokeDasharray="7 3" />
    {[285, 320, 352, 450, 492].map((x) => <path key={x} d={`M${x - 12} 835q12 -20 24 0`} />)}
    <path d="M28 835H545" strokeWidth="2" />
    <path d="M28 860H215M270 860H650M690 860H755" strokeWidth="1.6" />
    <path d="M28 895H755M28 920H755" strokeWidth="1.3" />
    <path d="M540 840C590 780 690 780 755 835M520 900C570 850 690 850 755 900" strokeWidth="1.6" />
    <path d="M730 432 748 458M748 432 730 458M120 920 136 938M136 920 120 938" strokeWidth="1.3" />
    <path d="M28 860 90 968M28 900 60 968M500 968 550 880M720 968 755 900" strokeWidth="1.2" />
    <g fill="#bcbcbc" stroke="none" fontFamily="Liberation Sans" fontSize="28">
      <text x="620" y="282">1</text><text x="634" y="262" fontSize="20">1</text><text x="634" y="292" fontSize="20">2</text>
      <text x="592" y="520" fontWeight="700" fontSize="26">1/4R</text>
      <text x="678" y="583" fontSize="26">7</text><text x="678" y="611" fontSize="26">8</text>
      <text x="226" y="870">4</text><text x="240" y="858" fontSize="20">1</text><text x="240" y="880" fontSize="20">4</text>
      <text x="655" y="872">1</text><text x="668" y="853" fontSize="20">3</text><text x="668" y="880" fontSize="20">4</text>
      <text x="505" y="925" fontSize="26">9</text><text x="518" y="940" fontSize="24">8</text>
    </g>
  </g>
);
const LeftDwg = () => (
  <Dwg viewBox="28 142 727 826" preserveAspectRatio="none">
    <DrawingCommon />
    <g fill="none">
      <ellipse cx="277" cy="618" rx="63" ry="82" stroke="#9a3c9a" strokeWidth="1.6" />
      <path d="M365 697H515" stroke="#9a3c9a" strokeWidth="1.6" />
      <path d="M367 697V830M367 745H420V830M367 700H384V722H367" stroke="#d81e1e" strokeWidth="1.6" />
      <path d="M358 835q12 -18 24 -4 12 10 16 0 12 -14 30 4" stroke="#d81e1e" strokeWidth="1.6" />
    </g>
  </Dwg>
);
const RightDwg = () => (
  <Dwg viewBox="28 142 730 826" preserveAspectRatio="none">
    <DrawingCommon />
    <g fill="none">
      <ellipse cx="279" cy="617" rx="55" ry="72" stroke="#e0cf1f" strokeWidth="1.8" />
      <path d="M458 697H516" stroke="#e0cf1f" strokeWidth="1.8" />
      <path d="M358 580H342V612M315 652H362M342 652V690" stroke="#4ea025" strokeWidth="1.6" />
    </g>
    <text x="366" y="589" fill="#54ac28" fontFamily="Liberation Sans" fontSize="26">0.1875</text>
  </Dwg>
);

const PlanUnit = ({ x, y, top, bottom, extra }: { x: number; y: number; top?: string; bottom?: string; extra?: string }) => {
  const doors = [87, 147, 209];
  const stair = extra === '#e4e4e4' ? '#e4e4e4' : '#2a6fc4';
  return (
    <g transform={`translate(${x} ${y})`} fill="none" stroke="#e4e4e4" strokeWidth="1.3">
      <path d="M0 18h60v107H0zM5 30V120M5 125h56" />
      {Array.from({ length: 12 }, (_, i) => <path key={i} d={`M${5 + i * 4.5} 34V112`} stroke="#9a9a9a" strokeWidth="0.8" />)}
      <path d="M0 18h150V0h165v265H57V18M0 28h150M150 12h155v253M65 28V255h240M57 240H255M57 248H255M57 255H255" />
      <path d="M150 0v28M125 32h14v6h-14z" fill="#e4e4e4" />
      <path d="M65 138h26M119 138h27M180 138h27M242 138h10V225M255 138v102M255 138h50" strokeWidth="2" />
      <path d="M125 140V225M185 140V225M65 225h190" stroke="#c8c8c8" />
      {[92, 152, 212].map((c) => (
        <g key={c}>
          <ellipse cx={c} cy={200} rx={11} ry={18} />
          <path d={`M${c - 10} 218h20`} />
          <rect x={c - 30} y={170} width={5} height={14} />
        </g>
      ))}
      <path d="M275 215h40v50h-40zM275 215l40 50M315 215l-40 50" strokeWidth="1.6" />
      <path d="M135 255h14v8h-14z" />
      {top && doors.map((d) => <path key={d} d={`M${d} 137C${d} 112 ${d + 8} 97 ${d + 32} 92V137`} stroke={top} strokeWidth="1.5" />)}
      {bottom && doors.map((d) => <path key={d} d={`M${d} 137C${d} 162 ${d + 10} 178 ${d + 32} 180V137`} stroke={bottom} strokeWidth="1.5" />)}
      <path d="M262 138C262 115 275 96 295 95V150" stroke={extra ?? '#2a6fc4'} strokeWidth="1.5" />
      <path d="M5 34C10 70 30 95 62 100" stroke={stair} strokeWidth="1.5" />
      <path d="M5 35H60" stroke={stair} strokeWidth="1.5" />
    </g>
  );
};

/* ---------- dialogs ---------- */
const Tick = ({ s }: { s: number }) => (
  <svg width={s} height={s} viewBox="0 0 12 12"><path d="M2 6l3 3 5-7" fill="none" stroke="#333" strokeWidth="1.3" /></svg>
);

const PdfDialog = () => (
  <Callout $x={292} $y={225} $w={258} $h={334}>
    <DlgTitle $h={21} $fs={14}>PDF読込<X size={16} color="#444" strokeWidth={1.5} /></DlgTitle>
    <Group $h={78} $mt={16} $ml={10} $mr={6}>
      <Legend $x={6}>ページ指定</Legend>
      <Row $h={19} $mt={7} $ml={10} $gap={3}><Radio $on $s={11} /><Fix $w={59} $ls={-1}>すべて</Fix>1</Row>
      <Row $h={19} $mt={1} $ml={10} $gap={3}>
        <Radio $s={11} /><Fix $w={55} $ls={-1.4}>ページ指定</Fix><Field $w={141} $h={18} $bg="#ededed" $bc="#cfcfcf" />
      </Row>
      <HelpLine $mt={4}>1,3,6のようにページ番号をカンマで区切って指定す</HelpLine>
      <HelpLine>るか、4-8のようにページ範囲を指定してください。</HelpLine>
    </Group>
    <Group $h={51} $mt={12} $ml={10} $mr={6}>
      <Legend $x={6}>配置順序</Legend>
      <Row $h={18} $mt={8} $ml={10} $gap={3}>
        <Radio $on $s={11} /><Fix $w={32}>横</Fix><Field $w={50} $h={18} $align="flex-end" $bc="#aaa">10</Field><Spacer $w={2} />列
      </Row>
      <Row $h={18} $mt={3} $ml={10} $gap={3}>
        <Radio $s={11} /><Fix $w={32}>縦</Fix><Field $w={50} $h={18} $align="flex-end" $bg="#ebebeb" $bc="#d4d4d4" $color="#888">10</Field><Spacer $w={2} />段
      </Row>
    </Group>
    <Group $h={31} $mt={7} $ml={10} $mr={6}>
      <Legend $x={6}>円、円弧変換</Legend>
      <Row $h={18} $mt={9} $ml={10} $gap={3}>
        <Check $s={11} /><Fix $w={30}>変換</Fix><Fix $w={55} $ls={-0.8}>許容角度</Fix><Field $w={68} $h={17} $align="flex-end" $bg="#ebebeb" $bc="#d4d4d4" $color="#888">5.00</Field>
      </Row>
    </Group>
    <Row $h={18} $mt={3} $ml={20} $gap={3} $fs={12.5} $ls={-1.1}><Check $s={11} />矢印塗りつぶし</Row>
    <Row $h={18} $ml={20} $gap={3} $fs={12.5} $ls={-1.1}><Check $s={11} />図枠作成</Row>
    <Row $h={18} $ml={20} $gap={3} $fs={12.5} $ls={-1.1}><Check $s={11} />テキスト結合</Row>
    <Row $h={18} $ml={20} $gap={3} $fs={12.5} $ls={-1.1}><Check $on $s={11}><Tick s={11} /></Check>重複テキスト削除</Row>
    <BtnBar $pr={8} $mt={12}>
      <DlgBtn $w={65} $h={19} $fs={13} $default>OK</DlgBtn>
      <DlgBtn $w={65} $h={19} $ml={10} $fs={13}>キャンセル</DlgBtn>
    </BtnBar>
  </Callout>
);

const SettingTabs: [string, number][] = [['読み込み', 28], ['書き出し', 27], ['線種', 22], ['色', 24], ['線幅', 24], ['JWS読み込み', 40]];
const F9 = 8.5;
const SettingsDialog = () => (
  <Callout $x={582} $y={225} $w={238} $h={334} $bg="#fff">
    <DlgTitle $h={14} $fs={9}>設定<X size={8} color="#444" /></DlgTitle>
    <Tabs $ml={5} $h={11} $mt={1}>
      {SettingTabs.map(([t, w], i) => <Tab key={t} $w={w} $on={i === 0} $fs={7.5}>{t}</Tab>)}
    </Tabs>
    <WhiteFill>
      <Group $h={54} $mt={7} $ml={5} $mr={39} $fs={F9}>
        <Legend $bg="#fff" $x={4} $fs={F9}>図形の寸法</Legend>
        <Row $h={13} $mt={6} $ml={11} $gap={2} $fs={7.5}><Radio $s={7} />実寸にする(書込レイヤーグループの倍率を使用)(G)</Row>
        <Row $h={13} $mt={1} $ml={11} $gap={2} $fs={7.5}><Radio $s={7} />用紙の大きさにする(P)</Row>
        <Row $h={15} $mt={1} $ml={11} $gap={2} $fs={7.5}><Radio $on $s={7} /><Fix $w={95}>指定の倍率(U)</Fix>1 /<Field $w={43} $h={15} $ml={5} $bc="#999" $fs={6}>100</Field></Row>
      </Group>
      <Group $h={74} $mt={9} $ml={5} $mr={39} $fs={F9}>
        <Legend $bg="#fff" $x={4} $fs={F9}>レイヤー</Legend>
        <Row $h={14} $mt={10} $ml={11} $fs={7}><Fix $w={74}>名前オプション(N)</Fix><Field $w={95} $h={13} $bg="#d9d9d9" $bc="#ccc" $fs={7.5}>番号と名前</Field></Row>
        <Row $h={13} $mt={4} $ml={12} $gap={2} $fs={7.5}><Radio $on $s={7} />必要なレイヤーのみ作成(U)</Row>
        <Row $h={13} $mt={3} $ml={12} $gap={2} $fs={7.5}><Radio $s={7} />256レイヤー全て作成(A)</Row>
        <Row $h={13} $mt={2} $ml={12} $gap={2} $fs={7.5}><Check $s={7} />レイヤー番号が重複する画層を作成しない(D)</Row>
      </Group>
      <Group $h={97} $mt={9} $ml={5} $mr={39} $fs={F9}>
        <Legend $bg="#fff" $x={5} $fs={F9}>文字</Legend>
        <Row $h={14} $mt={9} $ml={11} $fs={7}><Fix $w={74}>生成オプション(G)</Fix><Field $w={95} $h={13} $bg="#d9d9d9" $bc="#ccc" $fs={7.5}>テキストを生成</Field></Row>
        <Row $h={14} $mt={9} $ml={12} $fs={7}><Fix $w={73}>高さの係数(S)</Fix><Field $w={95} $h={13} $bc="#888" $fs={7}>1</Field></Row>
        <Row $h={13} $mt={6} $ml={12} $gap={2} $fs={7.5}><Check $s={7} />マルチテキストの幅を0にする(Z)</Row>
        <Row $h={14} $mt={7} $ml={11} $fs={7}><Fix $w={74} $ls={-0.6}>テキストの位置合わせ(A)</Fix><Field $w={95} $h={13} $bg="#d9d9d9" $bc="#ccc" $fs={7.5}>フィットを使用</Field></Row>
      </Group>
    </WhiteFill>
    <BottomBand $h={19}>
      <DlgBtn $w={45} $h={12} $ml={85} $fs={8} $default>OK</DlgBtn>
      <DlgBtn $w={43} $h={12} $ml={6} $fs={8}>キャンセル</DlgBtn>
      <DlgBtn $w={44} $h={12} $ml={4} $fs={8} $muted>適用(A)</DlgBtn>
    </BottomBand>
  </Callout>
);

const SxfTabs: [string, number][] = [['図面全体', 34], ['線種', 25], ['点マーカー', 32], ['文字', 26], ['寸法線', 27], ['ハッチング', 30]];
const SxfDialog = () => (
  <Callout $x={292} $y={585} $w={408} $h={306}>
    <DlgTitle $h={13} $fs={9}>SXF入力条件設定<X size={8} color="#444" /></DlgTitle>
    <Tabs $ml={4} $h={11} $mt={5}>
      {SxfTabs.map(([t, w], i) => <Tab key={t} $w={w} $on={i === 0} $fs={7.5}>{t}</Tab>)}
    </Tabs>
    <WhitePage $h={249} $mx={4}>
      <Group $h={79} $mt={9} $ml={3} $mr={2} $fs={8} $bc="#e2e2e2">
        <Legend $bg="#fff" $x={4} $fs={8}>SXF入力モード</Legend>
        <Row $h={14} $mt={7} $ml={13} $gap={2} $fs={8}><Radio $on $s={7} />OCF準拠 (寸法、文字、スプライン等の編集ができません)</Row>
        <Row $h={14} $mt={3} $ml={13} $gap={2} $fs={8}><Radio $s={7} />編集可能 (一部の図形で見た目が異なります)</Row>
        <Row $h={14} $mt={3} $ml={13} $gap={2} $fs={8}><Radio $s={7} />編集設定 (下記選択のみ編集可能となります)</Row>
        <Row $h={14} $mt={3} $ml={23} $gap={2} $fs={8}>
          <Check $s={7} /><Fix $w={52}>各種寸法</Fix><Check $s={7} /><Fix $w={52}>文字</Fix><Check $s={7} />スプライン
        </Row>
      </Group>
      <Group $h={44} $mt={14} $ml={3} $mr={2} $fs={8} $bc="#e2e2e2">
        <Legend $bg="#fff" $x={4} $fs={8}>誤差値</Legend>
        <Row $h={12} $mt={8} $ml={17} $fs={8}>SXF入力時に、次の値以下のときはゼロとみなします。</Row>
        <Row $h={14} $mt={2} $ml={26} $fs={8}>
          <Fix $w={48} $ls={-0.8}>長さ用誤差値:</Fix><Field $w={61} $h={14} $bc="#999" $fs={7}>0.001</Field><Spacer $w={17} /><Fix $w={50} $ls={-0.8}>角度用誤差値:</Fix><Field $w={61} $h={14} $bc="#999" $fs={7}>0.001</Field>
        </Row>
      </Group>
      <Group $h={65} $mt={11} $ml={3} $mr={2} $fs={8} $bc="#e2e2e2">
        <Legend $bg="#fff" $x={4} $fs={8}>レイヤファイル作成</Legend>
        <Row $h={12} $mt={9} $ml={17} $fs={8}>SXFファイルから、レイヤ定義ファイル(*.OLY)を生成するときにONにします。</Row>
        <Row $h={12} $mt={4} $ml={26} $gap={2} $fs={8} $color="#aaa"><Check $s={7} $muted />レイヤ定義ファイルを作成</Row>
        <Row $h={15} $mt={4} $ml={26} $fs={8}>
          <Fix $w={48} $ls={-1}>レイヤファイル名:</Fix><Field $w={192} $h={15} $bc="#ddd" /><DlgBtn $w={38} $h={14} $ml={5} $fs={8} $muted>参照...</DlgBtn>
        </Row>
      </Group>
    </WhitePage>
    <BtnBar $pr={1} $mt={6}>
      <DlgBtn $w={49} $h={13} $fs={8}>ファイル出力</DlgBtn>
      <DlgBtn $w={49} $h={13} $ml={4} $fs={8}>ファイル入力</DlgBtn>
      <DlgBtn $w={48} $h={13} $ml={5} $fs={8}>初期化</DlgBtn>
      <DlgBtn $w={48} $h={13} $ml={5} $fs={8} $default>OK</DlgBtn>
      <DlgBtn $w={48} $h={13} $ml={4} $fs={8}>キャンセル</DlgBtn>
    </BtnBar>
  </Callout>
);

const CompareWindow = () => (
  <Callout $x={852} $y={224} $w={626} $h={335} $bg="#3a3a3a">
    <CmpStrip $h={11} $bg="#2d2d2d" $fs={7}>
      <CmpCell $w={88}>作成 ▾</CmpCell>
      <CmpCell $w={112}>修正 ▾</CmpCell>
      <CmpCell $w={110}>画層 ▾</CmpCell>
      <CmpCell $w={65}>注釈 ▾</CmpCell>
      <CmpCell $w={66}>ブロック ▾</CmpCell>
      <CmpCell $w={100}>オブジェクト プロパティ管理 ▾</CmpCell>
      <CmpCell $w={48}>ユーティリティ</CmpCell>
      <CmpCell $w={28}>クリップ</CmpCell>
    </CmpStrip>
    <CmpStrip $h={11} $bg="#3a3a3a" $fs={5}>
      <CmpCell $w={46}>sample B_new.dwg</CmpCell>
      <CmpCell $w={48}>sample A_old.dwg</CmpCell>
    </CmpStrip>
    <CmpPanes>
      <CmpWin>
        <CmpBar $active>sample A_old.dwg<CmpBtnGap /><CmpBtn /><CmpBtn /><CmpBtn $red /></CmpBar>
        <CmpBody>
          <LeftDwg />
          <CmpV><CmpVThumb /></CmpV>
        </CmpBody>
        <CmpFoot>◂ ▸ ◂ ▸ モデル / レイアウト1 / +<CmpHScroll /></CmpFoot>
      </CmpWin>
      <CmpWin>
        <CmpBar>sample B_new.dwg<CmpBtnGap /><CmpBtn /><CmpBtn /><CmpBtn /></CmpBar>
        <CmpBody>
          <RightDwg />
          <CmpV><CmpVThumb /></CmpV>
        </CmpBody>
        <CmpFoot>◂ ▸ ◂ ▸ モデル / レイアウト1 / +<CmpHScroll /></CmpFoot>
      </CmpWin>
    </CmpPanes>
  </Callout>
);

const PlanWindow = () => (
  <Callout $x={852} $y={585} $w={294} $h={219} $bg="#161d28">
    <PlanSvg viewBox="27 27 700 635" preserveAspectRatio="none">
      <PlanUnit x={33} y={55} bottom="#2a6fc4" />
      <PlanUnit x={33} y={374} top="#2a6fc4" />
      <PlanUnit x={423} y={258} top="#c01f1f" bottom="#c8b81e" extra="#e4e4e4" />
    </PlanSvg>
  </Callout>
);

const CompareDialog = () => (
  <Callout $x={1158} $y={585} $w={320} $h={220}>
    <DlgTitle $h={12} $fs={9}>
      <Row $h={12} $gap={6}><Icn s={10}><rect x="4" y="2" width="14" height="20" fill={O} /><rect x="4" y="12" width="10" height="10" fill={B} /></Icn>図形比較</Row>
      <X size={8} color="#444" />
    </DlgTitle>
    <Group $h={116} $mt={5} $ml={6} $mr={2} $fs={8}>
      <Legend $x={4} $fs={8}>図形を指定</Legend>
      <Row $h={12} $mt={5} $ml={4} $gap={2} $fs={8.5}><Radio $on $s={8} />オブジェクトを選択</Row>
      <Row $h={14} $mt={4} $ml={7} $fs={8}><DlgBtn $w={133} $h={14} $fs={8}>比較元のオブジェクトと基点を選択</DlgBtn><CmpNote>697 個のオブジェクトが選択されています。</CmpNote></Row>
      <Row $h={14} $mt={5} $ml={7} $fs={8}><DlgBtn $w={133} $h={14} $fs={8}>比較先のオブジェクトと基点を選択</DlgBtn><CmpNote>697 個のオブジェクトが選択されています。</CmpNote></Row>
      <Row $h={12} $mt={5} $ml={4} $gap={2} $fs={8.5}><Radio $s={8} />ファイルを指定</Row>
      <Row $h={12} $mt={4} $ml={10} $fs={8} $color="#a2a2a2"><Fix $w={77}>比較元のファイル:</Fix><Field $w={179} $h={12} $bc="#ddd" /><DlgBtn $w={26} $h={12} $ml={4} $fs={8} $muted>...</DlgBtn></Row>
      <Row $h={12} $mt={2} $ml={10} $fs={8} $color="#a2a2a2"><Fix $w={77}>比較先のファイル:</Fix><Field $w={179} $h={12} $bc="#ddd" /><DlgBtn $w={26} $h={12} $ml={4} $fs={8} $muted>...</DlgBtn></Row>
    </Group>
    <Group $h={50} $mt={8} $ml={6} $mr={2} $fs={8}>
      <Legend $x={4} $fs={8}>図形を出力</Legend>
      <Row $h={13} $mt={7} $ml={3} $fs={8.5}>
        <Fix $w={116}><Radio $on $s={8} />現在のドキュメントに挿入</Fix><Fix $w={90}><Radio $s={8} />ファイルに出力</Fix><DlgBtn $w={78} $h={13} $fs={8}>出力設定</DlgBtn>
      </Row>
      <Row $h={12} $mt={7} $ml={6} $fs={8} $color="#a2a2a2">
        <Fix $w={84}>参照</Fix><Field $w={179} $h={12} $bc="#ddd" $fs={7.5} $color="#666">C:¥Users¥User¥Documents¥locmp.dwg</Field><DlgBtn $w={25} $h={12} $ml={4} $fs={8} $muted>...</DlgBtn>
      </Row>
    </Group>
    <BtnBar $pr={8} $mt={7}>
      <DlgBtn $w={49} $h={11} $fs={8} $default>OK</DlgBtn>
      <DlgBtn $w={49} $h={11} $ml={13} $fs={8}>キャンセル</DlgBtn>
      <DlgBtn $w={49} $h={11} $ml={14} $fs={8}>ヘルプ</DlgBtn>
    </BtnBar>
  </Callout>
);

/* ---------- app ---------- */
const layerColors = [O, '#b8b83a', '#3aa04a', B, '#49a0ff', G, B, B, B, O, B, '#4fa84f', B, G];

const statusIcons: [ReactNode, boolean][] = [
  [<Icn s={20}><path d="M4 5h16M4 9h16M4 13h16M4 17h16M8 3v18M12 3v18M16 3v18" stroke={G} strokeWidth="1" /><rect x="18" y="18" width="4" height="4" fill={B} /></Icn>, false],
  [<Icn s={20}><path d="M4 8h16M4 15h16M8 3v18M15 3v18" stroke={G} strokeWidth="1.5" /></Icn>, true],
  [<Icn s={20}><path d="M6 3v17h14M6 14h5v6" stroke={G} strokeWidth="1.8" /></Icn>, false],
  [<Icn s={20}><path d="M19 8a8 8 0 1 0 1 6" stroke={G} strokeWidth="1.6" /><path d="M12 12 19 5" stroke={G} strokeWidth="1.4" /></Icn>, true],
  [<Icn s={20}><rect x="5" y="4" width="14" height="17" stroke={G} strokeWidth="1.5" /><rect x="16" y="2" width="4" height="4" fill={B} /></Icn>, true],
  [<Icn s={20}><path d="M6 3 18 20M4 20h16M18 5 8 20" stroke={G} strokeWidth="1.3" /></Icn>, true],
  [<Icn s={20}><path d="M12 2v20M2 12h9" stroke={G} strokeWidth="4" /></Icn>, false],
  [<Icn s={20}><path d="M6 3v10M2 8h8" stroke={G} strokeWidth="1.3" /><rect x="9" y="8" width="12" height="14" fill={G} /><path d="M11 12h8M11 15h8M11 18h8" stroke="#333" /></Icn>, true],
  [<Icn s={20}><path d="M3 5h18M3 11h18M3 17h18" stroke={G} strokeWidth="2.6" /></Icn>, false],
  [<Icn s={20}><path d="M2 3h16" stroke={B} strokeWidth="2" strokeDasharray="2 1" /><path d="M13 6h7l-3 15z" fill={G} /></Icn>, false],
  [<Icn s={20}>{layerBase}<circle cx="20" cy="19" r="3" fill={B} /></Icn>, false],
  [<Icn s={20}><circle cx="11" cy="10" r="7" stroke={G} strokeWidth="1.6" /><path d="M16 15 21 22" stroke={G} strokeWidth="2.4" /><path d="M5 14h12" stroke={B} strokeWidth="2" /></Icn>, false],
  [<Icn s={20}><rect x="3" y="9" width="12" height="12" fill={B} /><rect x="8" y="4" width="13" height="12" fill={G} /><rect x="11" y="7" width="7" height="6" fill={B} /></Icn>, true],
  [<Icn s={20}><path d="M12 2 18 21H6z" fill={G} /><path d="M3 22h18" stroke={G} strokeWidth="2" /></Icn>, false],
];
const statusIcons2: [ReactNode, boolean][] = [
  [<Icn s={20}><path d="M10 4 16 21H4z" fill={G} /><rect x="17" y="2" width="3" height="8" fill={O} /></Icn>, false],
  [<Icn s={20}><path d="M10 4 16 21H4z" fill="#8a8a8a" /><path d="M18 2v6M15 5h6" stroke={G} strokeWidth="1.4" /></Icn>, false],
  [<Icn s={20}><rect x="4" y="3" width="16" height="18" fill={D} /><path d="M4 7h16M4 11h16M4 15h16M8 3v18M12 3v18M16 3v18" stroke="#eee" strokeWidth="1.4" strokeDasharray="2 2" /></Icn>, true],
  [<Icn s={20}><rect x="5" y="3" width="14" height="18" fill={G} /><path d="M8 7h8M8 11h8M8 15h8" stroke="#333" strokeWidth="1.8" /></Icn>, false],
  [<Icn s={20}><path d="M16 4a9 9 0 1 0 0 16" stroke={G} strokeWidth="1.5" /><path d="M13 7v8M10 12l3 4 3-4" stroke={G} strokeWidth="1.5" /></Icn>, true],
];

export default function App() {
  return (
    <Root>
      <Global />
      <LogoBadge>
        <Icn s={32}>
          <rect x="5" y="5" width="9" height="10" fill={O} />
          <path d="M14.25 3.75h6v18H3.75v-6h10.5z" fill="#1c8fd0" />
        </Icn>
      </LogoBadge>
      <TitleBar>
        <QuickIcon><Icn s={19}><path d="M6 1h8l5 5v17H6z" fill={G} /></Icn></QuickIcon>
        <QuickIcon><Icn s={18}><path d="M3 7h7l2 2h9v10H3z" fill={G} /></Icn></QuickIcon>
        <QuickIcon><Icn s={18}><path d="M4 3h4v6h8V3h4v18H4z" fill={G} /><rect x="7" y="14" width="10" height="4" fill="#2f2f2f" /></Icn></QuickIcon>
        <QuickIcon><Icn s={18}><path d="M4 3h4v6h8V3h4v18H4z" fill={G} /><path d="M15 10h5l-7 11-2-4z" fill={O} /></Icn></QuickIcon>
        <QuickIcon><Icn s={19}><rect x="7" y="3" width="10" height="5" fill={G} /><rect x="3" y="9" width="18" height="8" fill={G} /><rect x="7" y="15" width="10" height="6" fill="#777" /></Icn></QuickIcon>
        <QuickIcon $w={24}><Icn s={18}><path d="M12 5 3 12l9 7v-4c4 0 6 1 8 5 0-8-3-11-8-11z" fill="#666" /></Icn></QuickIcon>
        <QuickIcon $w={11}><ChevronDown size={9} color="#888" /></QuickIcon>
        <QuickIcon $w={24}><Icn s={18}><path d="M12 5l9 7-9 7v-4c-4 0-6 1-8 5 0-8 3-11 8-11z" fill="#666" /></Icn></QuickIcon>
        <QuickIcon $w={10}><ChevronDown size={9} color="#888" /></QuickIcon>
        <WorkspaceCombo>2D 製図<ChevronDown size={8} color="#555" /></WorkspaceCombo>
        <QuickIcon $w={38}><ChevronDown size={10} color="#666" /></QuickIcon>
        <WindowButtons>
          <Minus size={13} color="#b8b8b8" strokeWidth={2} style={{ marginTop: 8 }} />
          <Square size={11} color="#b8b8b8" strokeWidth={2} style={{ marginLeft: 4 }} />
          <X size={17} color="#c8c8c8" strokeWidth={2} style={{ marginLeft: 2 }} />
        </WindowButtons>
      </TitleBar>
      <MenuBar>{menu.map(([t, w]) => <MenuItem key={t} $w={w}>{t}</MenuItem>)}</MenuBar>
      <TabBar>
        {ribbonTabs.map(([t, w], i) => <RibbonTab key={t} $w={w} $active={i === 0}>{t}</RibbonTab>)}
        <TabRight>タイプ<ChevronDown size={8} color="#999" /><Minus size={9} color="#888" style={{ marginTop: 6, marginLeft: 6 }} /><Square size={8} color="#888" style={{ marginLeft: 4 }} /><X size={12} color="#aaa" style={{ marginLeft: 4 }} /></TabRight>
      </TabBar>
      <Ribbon>
        <Panel $w={251}>
          <PanelBody>
            <BigBtn $w={46}><Icn s={34}><path d="M4 21 20 3" stroke={G} strokeWidth="1" /><rect x="2.5" y="19.5" width="3" height="3" fill={B} /><rect x="18.5" y="1.5" width="3" height="3" fill={B} /></Icn><BigLabel>線分</BigLabel></BigBtn>
            <BigBtn $w={66}><Icn s={34}><path d="M6 21H15C21 19 22 6 12 4" stroke={G} strokeWidth="1" /><rect x="4" y="19.5" width="3.5" height="3" fill={B} /><rect x="13" y="19.5" width="3.5" height="3" fill={B} /><rect x="10" y="2.5" width="3.5" height="3" fill={B} /></Icn><BigLabel>ポリライン</BigLabel><Chev /></BigBtn>
            <BigBtn $w={44}><Icn s={34}><circle cx="12" cy="12" r="10" stroke={G} strokeWidth="1" /><path d="M12 13 17 5" stroke={G} strokeWidth="1" /><rect x="10.5" y="11.5" width="3" height="3" fill={B} /></Icn><BigLabel>円</BigLabel><Chev /></BigBtn>
            <BigBtn $w={52}><Icn s={34}><path d="M4 22C4 12 10 4 21 2" stroke={G} strokeWidth="1" /><rect x="2.5" y="19.5" width="3" height="3" fill={B} /><rect x="6" y="9" width="3" height="3" fill={B} /><rect x="19" y="1" width="3" height="3" fill={B} /></Icn><BigLabel>円弧</BigLabel><Chev /></BigBtn>
            <ToolCol $w={43}>
              <ToolRow><T n="dots" s={20} /><Chev /></ToolRow>
              <ToolRow><T n="ring" s={20} /><Chev /></ToolRow>
              <ToolRow><T n="hatch" s={20} /><Chev /></ToolRow>
            </ToolCol>
          </PanelBody>
          <PanelTitle>作成 <Chev /></PanelTitle>
        </Panel>
        <Panel $w={312}>
          <PanelBody $pl={6}>
            <ToolCol $w={91}>
              <ToolRow><T n="erase" s={20} />削除</ToolRow>
              <ToolRow><T n="scale" s={20} />尺度変更</ToolRow>
              <ToolRow><T n="move" s={20} />移動</ToolRow>
            </ToolCol>
            <ToolCol $w={85}>
              <ToolRow><T n="explode" s={20} />分解</ToolRow>
              <ToolRow><T n="stretch" s={20} />ストレッチ</ToolRow>
              <ToolRow><T n="rotate" s={20} />回転</ToolRow>
            </ToolCol>
            <ToolCol $w={57}>
              <ToolRow><T n="align" s={20} /><Chev /></ToolRow>
              <ToolRow><T n="mirror" s={20} />鏡像</ToolRow>
              <ToolRow><T n="copy" s={20} />複写</ToolRow>
            </ToolCol>
            <ToolCol $w={43}>
              <ToolRow><T n="grid4" s={20} /><Chev /></ToolRow>
              <ToolRow><T n="fillet" s={20} /><Chev /></ToolRow>
              <ToolRow><T n="trim" s={20} /><Chev /></ToolRow>
            </ToolCol>
            <ToolCol $w={24}>
              <ToolRow><T n="dash" s={20} /></ToolRow>
              <ToolRow><T n="offset" s={20} /></ToolRow>
              <ToolRow><T n="stamp" s={20} /></ToolRow>
            </ToolCol>
          </PanelBody>
          <PanelTitle>修正 <Chev /></PanelTitle>
        </Panel>
        <Panel $w={309}>
          <PanelBody>
            <BigBtn $w={84}>
              <Icn s={34}>{layerBase}<rect x="16" y="14" width="6" height="8" fill={B} /></Icn>
              <BigLabel>画層プロパティ<br />管理</BigLabel>
            </BigBtn>
            <ToolCol $w={222}>
              <LayerGrid>
                {layerColors.map((c, i) => <LayerIcn key={i} c={c} i={i} />)}
              </LayerGrid>
              <LayerCombo>
                <Icn s={14}><path d="M12 2a6 6 0 0 1 4 10v5H8v-5a6 6 0 0 1 4-10z" fill={O} /><rect x="9" y="19" width="6" height="3" fill={O} /></Icn>
                <Icn s={15}><circle cx="12" cy="12" r="5" fill={O} /><path d="M12 2v20M2 12h20M5 5l14 14M19 5 5 19" stroke={O} strokeWidth="1.5" /></Icn>
                <Icn s={14}><rect x="3" y="11" width="13" height="11" fill="#3aa04a" /><path d="M12 11V6a4 4 0 0 1 8 0" stroke="#3aa04a" strokeWidth="2" /></Icn>
                <Swatch />
                <Spacer $w={3} />0
                <ComboArrow><ChevronDown size={8} /></ComboArrow>
              </LayerCombo>
            </ToolCol>
          </PanelBody>
          <PanelTitle>画層 <Chev /></PanelTitle>
        </Panel>
        <Panel $w={177}>
          <PanelBody>
            <BigBtn $w={55}>
              <svg width="30" height="34" viewBox="0 0 30 34"><path d="M12 2h6l10 30h-5l-2.5-8h-11L7 32H2zM11 20h8L15 7z" fill="#d0d0d0" /></svg>
              <BigLabel>文字</BigLabel><Chev />
            </BigBtn>
            <ToolCol $w={122}>
              <ToolRow><T n="table" s={16} />表</ToolRow>
              <ToolRow><T n="leader" s={17} />マルチ引出線<Chev /></ToolRow>
              <ToolRow><T n="dim" s={18} />長さ寸法記入<Chev /></ToolRow>
            </ToolCol>
          </PanelBody>
          <PanelTitle>注釈 <Chev /></PanelTitle>
        </Panel>
        <Panel $w={183}>
          <PanelBody>
            <BigBtn $w={56}>
              <Icn s={34}><path d="M5 1h9l5 5v10H5z" fill={G} /><rect x="1" y="7" width="12" height="10" stroke={B} strokeWidth="1" /><circle cx="13" cy="17" r="5" stroke={B} strokeWidth="1" /></Icn>
              <BigLabel>挿入</BigLabel>
            </BigBtn>
            <ToolCol $w={127}>
              <ToolRow><T n="partial" s={20} />部分削除ブロック</ToolRow>
              <ToolRow><T n="blockdef" s={20} />ブロック定義</ToolRow>
              <ToolRow><T n="editor" s={20} />エディタ</ToolRow>
            </ToolCol>
          </PanelBody>
          <PanelTitle>ブロック <Chev /></PanelTitle>
        </Panel>
        <Panel $w={281}>
          <PanelBody>
            <BigBtn $w={62}>
              <Icn s={34}><path d="M14 3 22 9 17 15 9 9z" fill={O} /><path d="M9 9 17 15 12 23 3 12z" fill={B} /></Icn>
              <BigLabel>プロパティ<br />コピー</BigLabel>
            </BigBtn>
            <ToolCol $w={218}>
              <PropRow><T n="ltype" s={19} /><PropCombo><LineSample $w={90} />ByLayer<ComboArrow><ChevronDown size={8} /></ComboArrow></PropCombo></PropRow>
              <PropRow><T n="lweight" s={19} /><PropCombo><Spacer $w={0} /><LineSample $w={85} />ByLayer<ComboArrow><ChevronDown size={8} /></ComboArrow></PropCombo></PropRow>
              <PropRow><T n="colors" s={19} /><PropCombo><Swatch $s={17} />ByLayer<ComboArrow><ChevronDown size={8} /></ComboArrow></PropCombo></PropRow>
            </ToolCol>
          </PanelBody>
          <PanelTitle>オブジェクト プロパティ管理 <Chev /><Launcher /></PanelTitle>
        </Panel>
        <Panel $w={126}>
          <PanelBody>
            <BigBtn $w={62}>
              <Icn s={34}><path d="M2 5v10M22 5v10M2 10h20" stroke={B} strokeWidth="1.2" /><path d="M2 16h20v2M4 16v4M8 16v4M12 16v4M16 16v4M20 16v4" stroke={G} strokeWidth="1" /></Icn>
              <BigLabel>メジャー</BigLabel><Chev />
            </BigBtn>
            <ToolCol $w={28}>
              <ToolRow><T n="coord" s={19} /></ToolRow>
              <ToolRow><T n="calc" s={19} /></ToolRow>
              <ToolRow><T n="dimA" s={19} /></ToolRow>
            </ToolCol>
            <ToolCol $w={36}>
              <ToolRow><T n="selGroup" s={19} /><Chev /></ToolRow>
              <ToolRow><T n="quick" s={19} /><Chev /></ToolRow>
              <ToolRow><T n="selPick" s={19} /><Chev /></ToolRow>
            </ToolCol>
          </PanelBody>
          <PanelTitle>ユーティリティ</PanelTitle>
        </Panel>
        <Panel $w={93}>
          <PanelBody>
            <BigBtn $w={65}>
              <Icn s={34}><rect x="4" y="4" width="14" height="18" fill={G} /><rect x="8" y="2" width="6" height="4" fill="#333" stroke={G} /><path d="M10 10h6l4 4v9H10z" fill={B} /></Icn>
              <BigLabel>貼り付け</BigLabel><Chev />
            </BigBtn>
            <ToolCol $w={26}>
              <ToolRow><T n="pasteExt" s={20} /></ToolRow>
              <ToolRow><T n="cut" s={20} /></ToolRow>
              <ToolRow><T n="copyDoc" s={20} /></ToolRow>
            </ToolCol>
          </PanelBody>
          <PanelTitle>クリップボード</PanelTitle>
        </Panel>
      </Ribbon>
      <Main>
        <Props>
          <PropsTitle>プロパティ<Row $h={12} $gap={7}><Icn s={11}><path d="M8 3h8v9l3 3H5l3-3zM12 15v7" stroke="#5b5b5b" strokeWidth="2" /></Icn><X size={12} color="#5b5b5b" /></Row></PropsTitle>
          <SelectLine>
            <SelectBox>何も選択されていませ...<ChevronDown size={8} color="#666" /></SelectBox>
            <SelectTools>
              <Icn s={18}><path d="M8 2v14M1 9h14" stroke={B} strokeWidth="1.6" /><path d="M13 13 22 22M13 13h6M13 13v6" stroke={G} strokeWidth="2" /></Icn>
              <Icn s={18}><rect x="2" y="2" width="14" height="11" stroke={G} strokeWidth="1.6" /><path d="M12 10l9 9M12 10h6M12 10v6" stroke={B} strokeWidth="2" /></Icn>
              <Icn s={18}><rect x="2" y="3" width="13" height="11" stroke={G} strokeWidth="1.6" /><path d="M12 11l9 9M12 11h6M12 11v6" stroke={B} strokeWidth="2" /><path d="M19 1v7" stroke={O} strokeWidth="2.4" /></Icn>
            </SelectTools>
          </SelectLine>
          {sections.map((s) => (
            <React.Fragment key={s.t}>
              <SectionHead>{s.t}<Caret /></SectionHead>
              <SectionBody>
                {s.rows.map((r, i) => (
                  <PropLine key={i}>
                    <PropName>{r.n}</PropName>
                    <PropValue $dim={r.dim}>{r.v}</PropValue>
                  </PropLine>
                ))}
              </SectionBody>
            </React.Fragment>
          ))}
        </Props>
        <Doc>
          <DocTabs>
            <DocArrow><ChevronLeft size={10} /></DocArrow>
            <DocTab>Drawing1.dwg<X size={11} color="#aaa" /></DocTab>
          </DocTabs>
          <CanvasRow>
            <Canvas>
              <CanvasOverlay viewBox="267 212 1485 708">
                <g fill="none" stroke="#5b8a1d" strokeWidth="1">
                  <path d="M1496 293H1728M1631 219V413" />
                  <path d="M1496 338H1728M1584 219V413" strokeWidth="1.6" />
                  <path d="M1584 433V509H1496M1632 433V509H1728M1584 620V554H1496M1632 620V554H1728" strokeWidth="1.4" />
                </g>
                <path d="M1673 335V262H1541V368H1640M1673 402V368H1707" fill="none" stroke="#b4b4b4" strokeWidth="1.3" />
                <g fill="none" stroke="#a8a8a8" strokeWidth="1.3">
                  <path d="M805 810H946M875 730V883" />
                  <circle cx="875" cy="810" r="4" />
                  <rect x="288" y="888" width="13" height="12" />
                  <path d="M295 894H367M378 894l6-5 6 5M393 889l6 5" />
                </g>
              </CanvasOverlay>
              <CursorTip>点を指定:</CursorTip>
              <PdfDialog />
              <SettingsDialog />
              <CompareWindow />
              <SxfDialog />
              <PlanWindow />
              <CompareDialog />
            </Canvas>
            <VScroll>
              <ChevronUp size={14} strokeWidth={2.6} style={{ marginTop: 4 }} />
              <VThumb />
              <VFill />
              <ChevronDown size={14} strokeWidth={2.2} style={{ marginBottom: 2 }} />
            </VScroll>
          </CanvasRow>
          <DocFoot>
            <NavGroup>
              <ChevronLeft size={9} color="#ccc" strokeWidth={3.5} />
              <ChevronLeft size={9} color="#ccc" strokeWidth={3.5} />
              <ChevronRight size={9} color="#ccc" strokeWidth={3.5} />
              <ChevronRight size={9} color="#ccc" strokeWidth={3.5} />
            </NavGroup>
            <SheetTab $active $w={58}>モデル</SheetTab>
            <SheetTab $w={78}>レイアウト1</SheetTab>
            <SheetTab $w={78}>レイアウト2</SheetTab>
            <SheetTab $w={30}>+</SheetTab>
            <HScroll $w={716} $ml="449px">
              <ChevronLeft size={11} strokeWidth={2.8} />
              <HThumb />
              <VFill />
              <ChevronRight size={11} strokeWidth={2.8} />
            </HScroll>
          </DocFoot>
        </Doc>
      </Main>
      <Command>
        <CommandGrip>
          <X size={11} />
          <Icn s={10}><path d="M8 3h8v9l3 3H5l3-3zM12 15v7" stroke="#4d4d4d" strokeWidth="2" /></Icn>
        </CommandGrip>
        <CommandBox>
          <CommandHistory>
            <CommandLines>
              <CommandLine>コマンド:</CommandLine>
              <CommandLine>コマンド:</CommandLine>
            </CommandLines>
            <CmdScroll>
              <ChevronUp size={11} strokeWidth={2.8} />
              <ChevronDown size={11} strokeWidth={2.8} />
            </CmdScroll>
          </CommandHistory>
          <CommandInput>
            コマンド:
            <HScroll $w={88}>
              <ChevronLeft size={11} strokeWidth={2.8} />
              <HThumb />
              <VFill />
              <ChevronRight size={11} strokeWidth={2.8} />
            </HScroll>
            <Spacer $w={21} />
          </CommandInput>
        </CommandBox>
      </Command>
      <Status>
        <Coord>2173.8203, 485.5607, 0</Coord>
        {statusIcons.map(([c, on], i) => <StatusBtn key={i} $on={on}>{c}</StatusBtn>)}
        <StatusBtn $w={28}>1:1 ▾</StatusBtn>
        {statusIcons2.map(([c, on], i) => <StatusBtn key={i} $on={on}>{c}</StatusBtn>)}
        <StatusRight>
          <Icn s={18}><circle cx="12" cy="12" r="6" stroke={G} strokeWidth="4" /><path d="M12 1v4M12 19v4M1 12h4M19 12h4M4 4l3 3M17 17l3 3M20 4l-3 3M7 17l-3 3" stroke={G} strokeWidth="2.4" /></Icn>
          <Icn s={18}><rect x="4" y="11" width="12" height="11" fill={B} /><path d="M12 11V6a4 4 0 0 1 8 0v2" stroke={B} strokeWidth="2" /></Icn>
          <Icn s={18}><path d="M12 1a7 7 0 0 1 4 12v5H8v-5a7 7 0 0 1 4-12z" fill={O} /><rect x="9" y="19" width="6" height="3" fill={O} /></Icn>
          <Icn s={18}><rect x="3" y="2" width="12" height="16" fill={B} /><circle cx="14" cy="14" r="5" stroke={G} strokeWidth="2.4" /><path d="M18 18l4 4" stroke={G} strokeWidth="2.4" /></Icn>
          <Icn s={18}><rect x="4" y="2" width="16" height="20" stroke={G} strokeWidth="1.5" /><path d="M9 7h6v6" stroke={G} strokeWidth="1.5" /></Icn>
          <span>IJCAD</span>
        </StatusRight>
      </Status>
    </Root>
  );
}
